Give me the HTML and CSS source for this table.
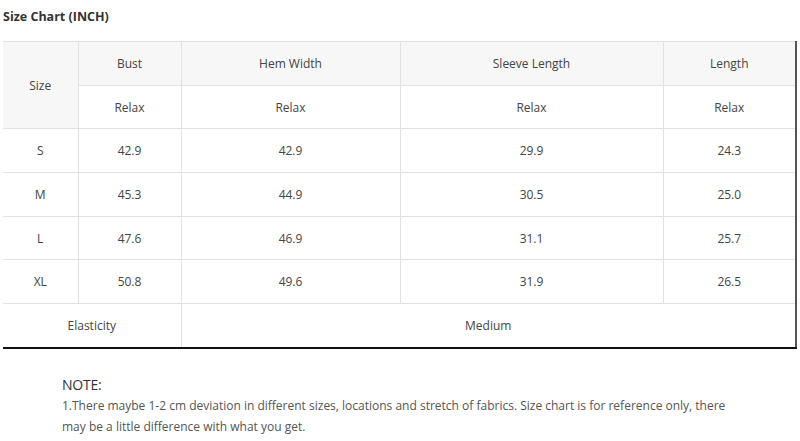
FILE: index.html
```html
<!DOCTYPE html>
<html>
<head>
<meta charset="utf-8">
<link rel="stylesheet" href="styles.css">
</head>
<body>
<div class="page">
  <h2 class="title">Size Chart (INCH)</h2>
  <table class="chart">
    <colgroup>
      <col class="c0"><col class="c1"><col class="c2"><col class="c3"><col class="c4">
    </colgroup>
    <tr class="head">
      <td rowspan="2" class="sizehead">Size</td>
      <td>Bust</td><td>Hem Width</td><td>Sleeve Length</td><td>Length</td>
    </tr>
    <tr class="short"><td>Relax</td><td>Relax</td><td>Relax</td><td>Relax</td></tr>
    <tr><td>S</td><td>42.9</td><td>42.9</td><td>29.9</td><td>24.3</td></tr>
    <tr><td>M</td><td>45.3</td><td>44.9</td><td>30.5</td><td>25.0</td></tr>
    <tr class="short"><td>L</td><td>47.6</td><td>46.9</td><td>31.1</td><td>25.7</td></tr>
    <tr><td>XL</td><td>50.8</td><td>49.6</td><td>31.9</td><td>26.5</td></tr>
    <tr class="last"><td colspan="2">Elasticity</td><td colspan="3">Medium</td></tr>
  </table>
  <div class="note">
    <div class="note-title">NOTE:</div>
    <p class="note-text">1.There maybe 1-2 cm deviation in different sizes, locations and stretch of fabrics. Size chart is for reference only, there may be a little difference with what you get.</p>
  </div>
</div>
</body>
</html>
```
FILE: styles.css
```css
html, body { margin: 0; padding: 0; background: #fff; }
body { font-family: "Open Sans", "Liberation Sans", sans-serif; color: #333; }
.page { padding: 0 4px 0 3px; }
.title {
  margin: 0;
  padding-top: 8px;
  height: 41px;
  box-sizing: border-box;
  font-size: 12.5px;
  font-weight: 700;
  color: #333;
  line-height: 18px;
}
.chart {
  width: 793px;
  border-collapse: collapse;
  table-layout: fixed;
  font-size: 12px;
  color: #444;
  border-right: 2px solid #555;
  border-bottom: 2px solid #111;
}
.c0 { width: 75px; }
.c1 { width: 103px; }
.c2 { width: 219px; }
.c3 { width: 263px; }
.c4 { width: 133px; }
.chart td {
  border: 1px solid #e2e2e2;
  text-align: center;
  height: 44px;
  padding: 0;
  box-sizing: border-box;
}
.chart .short td { height: 43px; }
.chart td:first-child { border-left: none; }
.chart tr:first-child td { border-top: 1px solid #e2e2e2; }
.head td, .sizehead { background: #f7f7f7; }
.last td { border-bottom: 2px solid #111; height: 44px; }
.note { padding: 26px 0 0 59px; }
.note-title {
  font-size: 14px;
  color: #333;
  line-height: 20px;
  letter-spacing: -0.2px;
}
.note-text {
  margin: 0;
  width: 672px;
  font-size: 12px;
  line-height: 21px;
  color: #555;
  letter-spacing: 0;
}
```
